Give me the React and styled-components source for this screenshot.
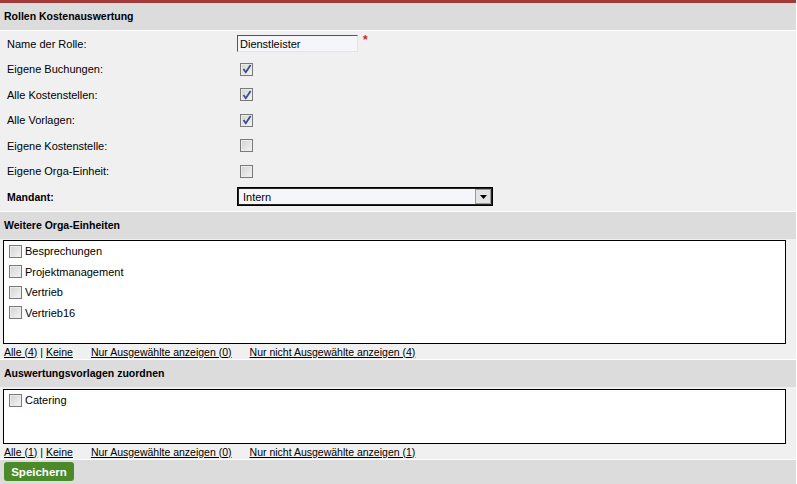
import React from 'react';
import styled, { createGlobalStyle } from 'styled-components';

const GlobalStyle = createGlobalStyle`
  body {
    margin: 0;
    background: #ffffff;
    font-family: "Liberation Sans", Arial, sans-serif;
    font-size: 11px;
    color: #000;
  }
`;

const Page = styled.div`
  width: 796px;
  border-top: 3px solid #a33a3a;
  background: #f0f0f0;
`;

const SectionHeader = styled.div`
  height: 27px;
  line-height: 27px;
  padding-left: 4px;
  background: #dcdcdc;
  font-weight: bold;
  font-size: 10.5px;
  border-bottom: ${p => (p.$top ? 'none' : '1px solid #ffffff')};
  border-top: ${p => (p.$top ? '1px solid #ffffff' : 'none')};
`;

const FormBody = styled.div`
  padding: 0 0 1.5px 1px;
  background: #f0f0f0;
`;

const Row = styled.div`
  display: grid;
  grid-template-columns: 236px 1fr;
  align-items: center;
  height: 25.5px;
`;

const Label = styled.div`
  padding-left: 6px;
  font-weight: ${p => (p.$bold ? 'bold' : 'normal')};
  font-size: ${p => (p.$bold ? '10.5px' : '11px')};
`;

const Field = styled.div`
  display: flex;
  align-items: flex-start;
  gap: 5px;
`;

const TextInput = styled.div`
  box-sizing: border-box;
  width: 121px;
  height: 17px;
  padding: 1px 2px;
  line-height: 14px;
  background: #f5f6fa;
  border-top: 1px solid #555;
  border-left: 1px solid #555;
  border-right: 1px solid #e2e2e8;
  border-bottom: 1px solid #e2e2e8;
`;

const Required = styled.span`
  color: #e02020;
  font-weight: bold;
  font-size: 12px;
  line-height: 10px;
`;

const Box = styled.span`
  box-sizing: border-box;
  display: inline-flex;
  align-items: center;
  justify-content: center;
  width: 13px;
  height: 13px;
  border: 1px solid #7a7a7a;
  background: linear-gradient(135deg, #d2d2d2 0%, #f4f4f4 100%);
  box-shadow: inset 0 0 0 1px #ececec;
  margin-left: ${p => p.$offset || 0}px;
  flex: none;
`;

const Select = styled.div`
  box-sizing: border-box;
  display: flex;
  align-items: center;
  width: 256px;
  height: 19px;
  border: 1px solid #000;
  box-shadow: inset 0 0 0 1px #222;
  background: #f5f6fa;
  padding: 1px 1px 1px 5px;
`;

const SelectValue = styled.span`
  flex: 1;
`;

const SelectButton = styled.span`
  box-sizing: border-box;
  display: flex;
  align-items: center;
  justify-content: center;
  width: 16px;
  height: 15px;
  background: #e4e4e4;
  border: 1px solid #9a9a9a;
`;

const ListBox = styled.div`
  box-sizing: border-box;
  margin: ${p => p.$top}px 10px 0 3px;
  height: ${p => p.$height}px;
  background: #ffffff;
  border: 1px solid #000;
  padding: 0 0 0 5px;
`;

const ListItem = styled.label`
  display: flex;
  align-items: center;
  gap: 3px;
  height: 20.5px;
`;

const LinkBar = styled.div`
  display: flex;
  align-items: center;
  height: 15px;
  padding-left: 4px;
  font-size: 10.5px;
  background: #f0f0f0;
`;

const Link = styled.a`
  color: #000;
  text-decoration: underline;
  margin-right: ${p => p.$gap || 0}px;
`;

const Sep = styled.span`
  margin: 0 3px;
`;

const Footer = styled.div`
  height: 25px;
  padding: 2px 0 0 4px;
  background: #dcdcdc;
  border-top: 1px solid #ffffff;
`;

const SaveButton = styled.button`
  height: 19px;
  width: 70px;
  padding: 0;
  border: none;
  border-radius: 3px;
  background: #4a8a28;
  color: #ffffff;
  font-family: "Liberation Sans", Arial, sans-serif;
  font-weight: bold;
  font-size: 11.5px;
`;

const Check = ({ checked, offset }) => (
  <Box $offset={offset}>
    {checked && (
      <svg width="10" height="10" viewBox="0 0 10 10">
        <path d="M1.5 5 L3.8 8.2 L8.6 1" fill="none" stroke="#3b4a92" strokeWidth="1.8" />
      </svg>
    )}
  </Box>
);

const formRows = [
  { label: 'Eigene Buchungen:', checked: true },
  { label: 'Alle Kostenstellen:', checked: true },
  { label: 'Alle Vorlagen:', checked: true },
  { label: 'Eigene Kostenstelle:', checked: false },
  { label: 'Eigene Orga-Einheit:', checked: false },
];

const orgUnits = ['Besprechungen', 'Projektmanagement', 'Vertrieb', 'Vertrieb16'];

function Links({ total }) {
  return (
    <LinkBar>
      <Link href="#">Alle ({total})</Link>
      <Sep>|</Sep>
      <Link href="#" $gap={18}>Keine</Link>
      <Link href="#" $gap={18}>Nur Ausgewählte anzeigen (0)</Link>
      <Link href="#">Nur nicht Ausgewählte anzeigen ({total})</Link>
    </LinkBar>
  );
}

export default function App() {
  return (
    <>
      <GlobalStyle />
      <Page>
        <SectionHeader>Rollen Kostenauswertung</SectionHeader>
        <FormBody>
          <Row>
            <Label>Name der Rolle:</Label>
            <Field>
              <TextInput>Dienstleister</TextInput>
              <Required>*</Required>
            </Field>
          </Row>
          {formRows.map(r => (
            <Row key={r.label}>
              <Label>{r.label}</Label>
              <Field>
                <Check checked={r.checked} offset={3} />
              </Field>
            </Row>
          ))}
          <Row>
            <Label $bold>Mandant:</Label>
            <Select>
              <SelectValue>Intern</SelectValue>
              <SelectButton>
                <svg width="7" height="4" viewBox="0 0 7 4">
                  <path d="M0 0 H7 L3.5 4 Z" fill="#000" />
                </svg>
              </SelectButton>
            </Select>
          </Row>
        </FormBody>

        <SectionHeader $top>Weitere Orga-Einheiten</SectionHeader>
        <ListBox $top={1} $height={104}>
          {orgUnits.map(u => (
            <ListItem key={u}>
              <Check />
              {u}
            </ListItem>
          ))}
        </ListBox>
        <Links total={4} />

        <SectionHeader $top>Auswertungsvorlagen zuordnen</SectionHeader>
        <ListBox $top={2} $height={55}>
          <ListItem>
            <Check />
            Catering
          </ListItem>
        </ListBox>
        <Links total={1} />

        <Footer>
          <SaveButton>Speichern</SaveButton>
        </Footer>
      </Page>
    </>
  );
}
